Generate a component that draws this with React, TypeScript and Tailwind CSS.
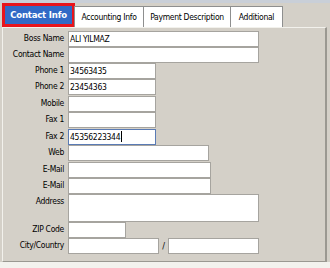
import React from 'react'

type Row = {
  label: string
  value?: string
  w: string
  h: string
  mt: string
  focused?: boolean
}

const rows: Row[] = [
  { label: 'Boss Name', value: 'ALI YILMAZ', w: 'w-[191px]', h: 'h-[16px]', mt: 'mt-0' },
  { label: 'Contact Name', w: 'w-[191px]', h: 'h-[16px]', mt: 'mt-0' },
  { label: 'Phone 1', value: '34563435', w: 'w-[88px]', h: 'h-[16px]', mt: 'mt-0' },
  { label: 'Phone 2', value: '23454363', w: 'w-[88px]', h: 'h-[16px]', mt: 'mt-0' },
  { label: 'Mobile', w: 'w-[88px]', h: 'h-[16px]', mt: 'mt-[1px]' },
  { label: 'Fax 1', w: 'w-[88px]', h: 'h-[16px]', mt: 'mt-0' },
  { label: 'Fax 2', value: '45356223344', w: 'w-[88px]', h: 'h-[16px]', mt: 'mt-[1px]', focused: true },
  { label: 'Web', w: 'w-[141px]', h: 'h-[16px]', mt: 'mt-0' },
  { label: 'E-Mail', w: 'w-[143px]', h: 'h-[16px]', mt: 'mt-[1px]' },
  { label: 'E-Mail', w: 'w-[143px]', h: 'h-[16px]', mt: 'mt-0' },
  { label: 'Address', w: 'w-[191px]', h: 'h-[28px]', mt: 'mt-0' },
  { label: 'ZIP Code', w: 'w-[58px]', h: 'h-[16px]', mt: 'mt-0' },
]

const font = "font-['DejaVu_Sans_Condensed','Liberation_Sans',sans-serif]"

function Field({ value, w, h, focused }: { value?: string; w: string; h: string; focused?: boolean }) {
  return (
    <div
      className={`${w} ${h} bg-white border flex items-start pl-[1px] pt-[1px] text-[8.5px] tracking-[-0.3px] leading-[12px] text-black ${
        focused ? 'border-[#5a7bb5]' : 'border-[#a6a49f]'
      }`}
    >
      {value}
      {focused && <span className="ml-[1px] w-px h-[11px] bg-black" />}
    </div>
  )
}

export default function App() {
  const tabs = [
    { label: 'Accounting Info', w: 'w-[70px]' },
    { label: 'Payment Description', w: 'w-[88px]' },
    { label: 'Additional', w: 'w-[53px]' },
  ]

  return (
    <div className={`w-[330px] h-[268px] bg-[#d4d0c8] overflow-hidden flex flex-col ${font}`}>
      <div className="h-[3px] bg-[#c9cfd8]" />

      {/* Tabs */}
      <div className="flex items-end h-[24px] pl-[2px] relative z-10">
        <div className="w-[73px] h-[24px] border-[3px] border-[#e8141c] bg-[#3169c6] flex items-center justify-center text-white font-bold text-[9.5px] tracking-[-0.2px]">
          Contact Info
        </div>
        {tabs.map((t) => (
          <div
            key={t.label}
            className={`${t.w} h-[21px] bg-white border border-[#8e8f8f] border-b-0 -ml-px first:ml-0 flex items-center justify-center text-[8.5px] tracking-[-0.3px] text-black`}
          >
            {t.label}
          </div>
        ))}
      </div>

      {/* Panel */}
      <div className="ml-[2px] w-[325px] h-[235px] border-t border-l border-t-[#f2f1ec] border-l-[#f2f1ec] border-r-2 border-r-[#9a9891] border-b border-b-[#9a9891] pt-[3px] flex flex-col">
        {rows.map((r, i) => (
          <div key={i} className={`flex items-start ${r.mt}`}>
            <div className="w-[62px] pr-[1px] text-right text-[8.5px] tracking-[-0.3px] leading-[14px] text-black">{r.label}</div>
            <div className="ml-[3px]">
              <Field value={r.value} w={r.w} h={r.h} focused={r.focused} />
            </div>
          </div>
        ))}
        <div className="flex items-start">
          <div className="w-[62px] pr-[1px] text-right text-[8.5px] tracking-[-0.3px] leading-[14px] text-black">City/Country</div>
          <div className="ml-[3px] flex items-start">
            <Field w="w-[91px]" h="h-[16px]" />
            <span className="w-[9px] text-center text-[9px] leading-[16px] text-black">/</span>
            <Field w="w-[91px]" h="h-[16px]" />
          </div>
        </div>
      </div>
      <div className="flex-1 bg-[#f3f2ee]" />
    </div>
  )
}
